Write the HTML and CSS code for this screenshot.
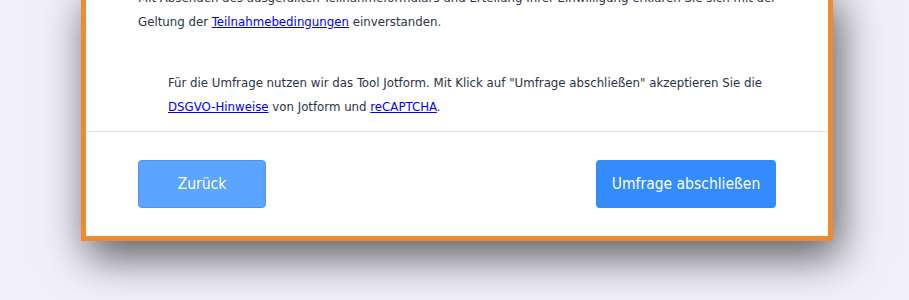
FILE: index.html
```html
<!DOCTYPE html>
<html lang="de">
<head>
    <meta charset="UTF-8">
    <meta name="viewport" content="width=device-width, initial-scale=1.0">
    <title>Umfrage</title>
    <link rel="stylesheet" href="styles.css">
</head>
<body>
    <div class="form-card">
        <div class="form-body">
            <p class="consent">Mit Absenden des ausgefüllten Teilnahmeformulars und Erteilung Ihrer Einwilligung erklären Sie sich mit der<br>Geltung der <a href="#">Teilnahmebedingungen</a> einverstanden.</p>
            <p class="privacy">Für die Umfrage nutzen wir das Tool Jotform. Mit Klick auf "Umfrage abschließen" akzeptieren Sie die <a href="#">DSGVO-Hinweise</a> von Jotform und <a href="#">reCAPTCHA</a>.</p>
        </div>
        <div class="form-footer">
            <button class="btn btn-back">Zurück</button>
            <button class="btn btn-submit">Umfrage abschließen</button>
        </div>
    </div>
</body>
</html>
```

FILE: styles.css
```css
html {
    background-color: #f0effb;
}

body {
    margin: 0;
    min-height: 300px;
    font-family: "DejaVu Sans Condensed", "DejaVu Sans", sans-serif;
    color: #2c3345;
}

.form-card {
    width: 752px;
    box-sizing: border-box;
    margin: -14px 0 0 81px;
    background-color: #fff;
    border: 5px solid #f08b2d;
    border-top: none;
    box-shadow: 6px 16px 40px rgba(0, 0, 0, 0.62);
}

.form-body {
    padding: 0 52px 12px 52px;
    border-bottom: 1px solid #e4e2ef;
}

.form-body p {
    margin: 0;
    font-size: 13.1px;
    line-height: 24px;
}

.form-body a {
    color: #0000ee;
}

.consent {
    padding-bottom: 37px;
    white-space: nowrap;
}

.privacy {
    padding-left: 30px;
}

.form-footer {
    display: flex;
    justify-content: space-between;
    padding: 28px 52px;
}

.btn {
    height: 48px;
    border-radius: 4px;
    color: #fff;
    font-family: inherit;
    font-size: 15.5px;
    cursor: pointer;
}

.btn-back {
    width: 128px;
    background-color: #5ca4fd;
    border: 1px solid #4a93f2;
}

.btn-submit {
    width: 180px;
    background-color: #348bfb;
    border: none;
}
```
